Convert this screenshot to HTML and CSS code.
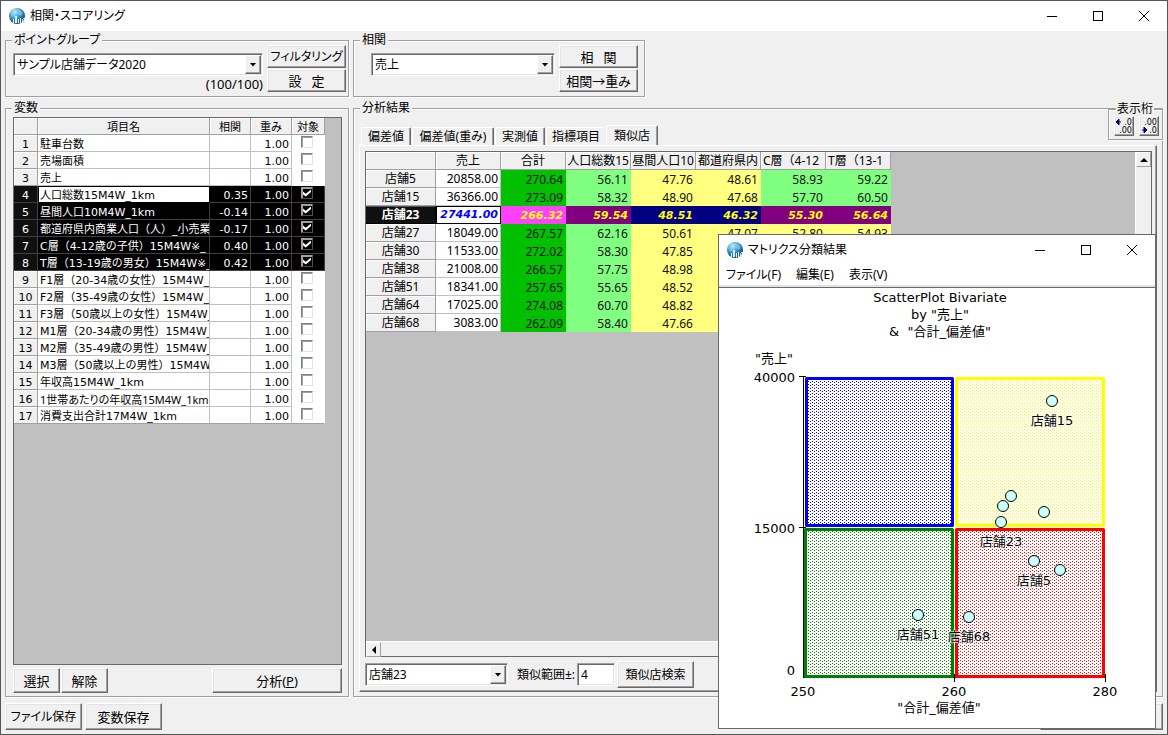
FILE: index.html
```html
<!DOCTYPE html>
<html lang="ja">
<head>
<meta charset="utf-8">
<title>相関・スコアリング</title>
<link rel="stylesheet" href="styles.css">
</head>
<body>
<svg width="0" height="0" class="defs" aria-hidden="true">
  <defs>
    <radialGradient id="globe" cx="35%" cy="25%" r="80%">
      <stop offset="0" stop-color="#d8f2fc"/><stop offset=".4" stop-color="#4aa6d4"/><stop offset=".8" stop-color="#14608f"/><stop offset="1" stop-color="#0a4a78"/>
    </radialGradient>
    <symbol id="logo" viewBox="0 0 17 17">
      <circle cx="8" cy="8" r="8" fill="url(#globe)"/>
      <path d="M8 1c3 0 5 2 6 5l-3 2-2-3zM2 5l3-3 1 4-3 4z" fill="#8fd0ee" opacity=".6"/>
      <path d="M4 15v-4h1v4zM6 15V8h2v7zM9 15v-4h1v4zM11 15v-5h1v5zM13 15v-3h1v3zM15 15v-5h1v5z" fill="#e8f6fc"/>
      <path d="M6 9l2 5M13 12l2-2M13 12l2 3" stroke="#c4dbe8" fill="none"/>
    </symbol>
    <symbol id="min" viewBox="0 0 12 12"><path d="M1 6.500h10" stroke="#000"/></symbol>
    <symbol id="max" viewBox="0 0 12 12"><path d="M1.500 1.500h9v9h-9z" stroke="#000" fill="none"/></symbol>
    <symbol id="close" viewBox="0 0 12 12"><path d="M1 1l10 10M11 1L1 11" stroke="#000" fill="none"/></symbol>
  </defs>
</svg>
<header class="titlebar">
  <svg class="logo"><use href="#logo"/></svg>
  <h1 class="title">相関・スコアリング</h1>
  <div class="winctl">
    <button aria-label="最小化"><svg><use href="#min"/></svg></button>
    <button aria-label="最大化"><svg><use href="#max"/></svg></button>
    <button aria-label="閉じる"><svg><use href="#close"/></svg></button>
  </div>
</header>

<main class="content">
  <fieldset class="group">
    <legend>ポイントグループ</legend>
    <div class="picker">
      <div class="picker-main">
        <span class="combo"><select aria-label="ポイントグループ"><option>サンプル店舗データ2020</option></select><i class="drop"></i></span>
        <span class="count">(100/100)</span>
      </div>
      <div class="picker-btns">
        <button class="btn kana">フィルタリング</button>
        <button class="btn">設&nbsp;&nbsp; 定</button>
      </div>
    </div>
  </fieldset>
  <fieldset class="group corr">
    <legend>相関</legend>
    <div class="picker">
      <div class="picker-main indent">
        <span class="combo"><select aria-label="相関"><option>売上</option></select><i class="drop"></i></span>
      </div>
      <div class="picker-btns">
        <button class="btn">相&nbsp;&nbsp; 関</button>
        <button class="btn">相関→重み</button>
      </div>
    </div>
  </fieldset>

  <fieldset class="group vars">
    <legend>変数</legend>
    <div class="sheet">
      <table class="vartable">
        <colgroup><col class="c-no"><col class="c-name"><col class="c-num"><col class="c-num"><col class="c-chk"></colgroup>
        <thead><tr><th></th><th>項目名</th><th>相関</th><th>重み</th><th>対象</th></tr></thead>
        <tbody>
          <tr><th>1</th><td>駐車台数</td><td></td><td>1.00</td><td><input type="checkbox" aria-label="1"></td></tr>
          <tr><th>2</th><td>売場面積</td><td></td><td>1.00</td><td><input type="checkbox" aria-label="2"></td></tr>
          <tr><th>3</th><td>売上</td><td></td><td>1.00</td><td><input type="checkbox" aria-label="3"></td></tr>
          <tr class="sel"><th>4</th><td class="focus">人口総数15M4W_1km</td><td>0.35</td><td>1.00</td><td><input type="checkbox" aria-label="4" checked></td></tr>
          <tr class="sel"><th>5</th><td>昼間人口10M4W_1km</td><td>-0.14</td><td>1.00</td><td><input type="checkbox" aria-label="5" checked></td></tr>
          <tr class="sel"><th>6</th><td>都道府県内商業人口（人）_小売業</td><td>-0.17</td><td>1.00</td><td><input type="checkbox" aria-label="6" checked></td></tr>
          <tr class="sel"><th>7</th><td>C層（4-12歳の子供）15M4W※_</td><td>0.40</td><td>1.00</td><td><input type="checkbox" aria-label="7" checked></td></tr>
          <tr class="sel"><th>8</th><td>T層（13-19歳の男女）15M4W※_</td><td>0.42</td><td>1.00</td><td><input type="checkbox" aria-label="8" checked></td></tr>
          <tr><th>9</th><td>F1層（20-34歳の女性）15M4W_</td><td></td><td>1.00</td><td><input type="checkbox" aria-label="9"></td></tr>
          <tr><th>10</th><td>F2層（35-49歳の女性）15M4W_</td><td></td><td>1.00</td><td><input type="checkbox" aria-label="10"></td></tr>
          <tr><th>11</th><td>F3層（50歳以上の女性）15M4W_</td><td></td><td>1.00</td><td><input type="checkbox" aria-label="11"></td></tr>
          <tr><th>12</th><td>M1層（20-34歳の男性）15M4W_</td><td></td><td>1.00</td><td><input type="checkbox" aria-label="12"></td></tr>
          <tr><th>13</th><td>M2層（35-49歳の男性）15M4W_</td><td></td><td>1.00</td><td><input type="checkbox" aria-label="13"></td></tr>
          <tr><th>14</th><td>M3層（50歳以上の男性）15M4W_</td><td></td><td>1.00</td><td><input type="checkbox" aria-label="14"></td></tr>
          <tr><th>15</th><td>年収高15M4W_1km</td><td></td><td>1.00</td><td><input type="checkbox" aria-label="15"></td></tr>
          <tr><th>16</th><td class="prop">1世帯あたりの年収高15M4W_1km</td><td></td><td>1.00</td><td><input type="checkbox" aria-label="16"></td></tr>
          <tr><th>17</th><td>消費支出合計17M4W_1km</td><td></td><td>1.00</td><td><input type="checkbox" aria-label="17"></td></tr>
        </tbody>
      </table>
    </div>
    <div class="varbtns">
      <button class="btn small">選択</button>
      <button class="btn small">解除</button>
      <button class="btn analyze">分析(<u>P</u>)</button>
    </div>
  </fieldset>

  <fieldset class="group results">
    <legend>分析結果</legend>
    <div class="tabs" role="tablist">
      <button class="tab" role="tab">偏差値</button>
      <button class="tab wide" role="tab">偏差値(重み)</button>
      <button class="tab" role="tab">実測値</button>
      <button class="tab open" role="tab">指標項目</button>
      <button class="tab active" role="tab" aria-selected="true">類似店</button>
    </div>
    <div class="panel">
      <div class="sheet scroller">
        <div class="view">
          <table class="shops">
            <colgroup><col class="s-name"><col span="7" class="s-val"></colgroup>
            <thead><tr><th></th><th>売上</th><th>合計</th><th>人口総数15</th><th>昼間人口10</th><th>都道府県内</th><th class="pre">C層（4-12</th><th class="pre">T層（13-1</th></tr></thead>
            <tbody>
              <tr><th>店舗5</th><td>20858.00</td><td class="g">270.64</td><td class="l">56.11</td><td class="y">47.76</td><td class="y">48.61</td><td class="l">58.93</td><td class="l">59.22</td></tr>
              <tr><th>店舗15</th><td>36366.00</td><td class="g">273.09</td><td class="l">58.32</td><td class="y">48.90</td><td class="y">47.68</td><td class="l">57.70</td><td class="l">60.50</td></tr>
              <tr class="cur"><th>店舗23</th><td>27441.00</td><td class="m">266.32</td><td class="p">59.54</td><td class="n">48.51</td><td class="n">46.32</td><td class="p">55.30</td><td class="p">56.64</td></tr>
              <tr><th>店舗27</th><td>18049.00</td><td class="g">267.57</td><td class="l">62.16</td><td class="y">50.61</td><td class="y">47.07</td><td class="y">52.80</td><td class="y">54.93</td></tr>
              <tr><th>店舗30</th><td>11533.00</td><td class="g">272.02</td><td class="l">58.30</td><td class="y">47.85</td><td class="y"></td><td class="y"></td><td class="y"></td></tr>
              <tr><th>店舗38</th><td>21008.00</td><td class="g">266.57</td><td class="l">57.75</td><td class="y">48.98</td><td class="y"></td><td class="y"></td><td class="y"></td></tr>
              <tr><th>店舗51</th><td>18341.00</td><td class="g">257.65</td><td class="l">55.65</td><td class="y">48.52</td><td class="y"></td><td class="y"></td><td class="y"></td></tr>
              <tr><th>店舗64</th><td>17025.00</td><td class="g">274.08</td><td class="l">60.70</td><td class="y">48.82</td><td class="y"></td><td class="y"></td><td class="y"></td></tr>
              <tr><th>店舗68</th><td>3083.00</td><td class="g">262.09</td><td class="l">58.40</td><td class="y">47.66</td><td class="y"></td><td class="y"></td><td class="y"></td></tr>
            </tbody>
          </table>
        </div>
        <div class="vbar"><button class="arrow" aria-label="上へ"><svg viewBox="0 0 8 8"><path d="M0 6l4-4 4 4z"/></svg></button></div>
        <div class="hbar"><button class="arrow" aria-label="左へ"><svg viewBox="0 0 8 8"><path d="M6 0L2 4l4 4z"/></svg></button></div>
      </div>
      <div class="search">
        <span class="combo"><select aria-label="店舗"><option>店舗23</option></select><i class="drop"></i></span>
        <label for="range">類似範囲±:</label>
        <input class="field" id="range" type="text" value="4">
        <button class="btn find">類似店検索</button>
      </div>
    </div>
    <fieldset class="group digits">
      <legend>表示桁</legend>
      <div class="digitbtns">
        <button class="btn" aria-label="桁を増やす"><svg viewBox="0 0 18 18"><path d="M1 5h5M4 2L1 5l3 3z" stroke="#000080" fill="#000080"/><text x="17" y="8">.0</text><text x="17" y="16">.00</text></svg></button>
        <button class="btn" aria-label="桁を減らす"><svg viewBox="0 0 18 18"><path d="M2 13h5M4 10l3 3-3 3z" stroke="#000080" fill="#000080"/><text x="17" y="8">.00</text><text x="17" y="16">.0</text></svg></button>
      </div>
    </fieldset>
  </fieldset>
</main>

<footer class="actions">
  <button class="btn kana">ファイル保存</button>
  <button class="btn">変数保存</button>
  <button class="btn last" aria-label="閉じる"></button>
</footer>

<section class="popup">
  <header class="titlebar">
    <svg class="logo"><use href="#logo"/></svg>
    <h2 class="title">マトリクス分類結果</h2>
    <div class="winctl">
      <button aria-label="最小化"><svg><use href="#min"/></svg></button>
      <button aria-label="最大化"><svg><use href="#max"/></svg></button>
      <button aria-label="閉じる"><svg><use href="#close"/></svg></button>
    </div>
  </header>
  <nav class="menu">
    <button>ファイル(F)</button><button>編集(E)</button><button>表示(V)</button>
  </nav>
  <svg class="chart" viewBox="719 288 436 440">
    <defs>
      <pattern id="d-blue" width="4" height="3" patternUnits="userSpaceOnUse"><path fill="#00f" d="M0 0h1v1h-1zM2 1h1v1h-1z"/></pattern>
      <pattern id="d-green" width="4" height="3" patternUnits="userSpaceOnUse"><path fill="#008000" d="M0 0h1v1h-1zM2 1h1v1h-1z"/></pattern>
      <pattern id="d-red" width="4" height="3" patternUnits="userSpaceOnUse"><path fill="#f00" d="M0 0h1v1h-1zM2 1h1v1h-1z"/></pattern>
      <pattern id="d-yellow" width="4" height="3" patternUnits="userSpaceOnUse"><path fill="#ff0" d="M0 0h1v1h-1zM2 1h1v1h-1z"/></pattern>
    </defs>
    <g class="mid">
      <text x="940" y="302">ScatterPlot Bivariate</text>
      <text x="940" y="319">by "売上"</text>
      <text x="940" y="336">&amp;&#160; "合計_偏差値"</text>
      <text x="803" y="696">250</text>
      <text x="954" y="696">260</text>
      <text x="1105" y="696">280</text>
      <text x="939" y="712">"合計_偏差値"</text>
    </g>
    <text x="755" y="363">"売上"</text>
    <g class="end">
      <text x="795" y="382">40000</text>
      <text x="795" y="533">15000</text>
      <text x="795" y="675">0</text>
    </g>
    <path class="axis" d="M799 376.500h7M799 527.500h7M803.500 376v302M803 677.500h303M954.500 674v8M1105.500 674v8"/>
    <g class="quad">
      <rect x="806.500" y="378.500" width="146" height="147" fill="url(#d-blue)" stroke="#00f"/>
      <rect x="956.500" y="378.500" width="147" height="147" fill="url(#d-yellow)" stroke="#ff0"/>
      <rect x="805.500" y="529.500" width="147" height="147" fill="url(#d-green)" stroke="#008000"/>
      <rect x="956.500" y="529.500" width="147" height="147" fill="url(#d-red)" stroke="#f00"/>
    </g>
    <g class="dots">
      <circle cx="1052" cy="401" r="5.500"/><circle cx="1011" cy="496" r="5.500"/><circle cx="1003" cy="506" r="5.500"/>
      <circle cx="1044" cy="512" r="5.500"/><circle cx="1001" cy="522" r="5.500"/><circle cx="1034" cy="561" r="5.500"/>
      <circle cx="1060" cy="570" r="5.500"/><circle cx="918" cy="615" r="5.500"/><circle cx="969" cy="617" r="5.500"/>
    </g>
    <g class="mid names">
      <text x="1052" y="425">店舗15</text>
      <text x="1001" y="546">店舗23</text>
      <text x="1034" y="585">店舗5</text>
      <text x="918" y="639">店舗51</text>
      <text x="969" y="641">店舗68</text>
    </g>
  </svg>
</section>
</body>
</html>
```
FILE: styles.css
```css
* { box-sizing: border-box; }

body {
  margin: 0;
  min-height: 100vh;
  display: flex;
  flex-direction: column;
  position: relative;
  border: 1px solid #555;
  background: #f0f0f0;
  color: #000;
  font: 12px/16px "Noto Sans", "Noto Sans CJK JP", sans-serif;
  font-feature-settings: "palt";
}

button, input, select { font: inherit; color: inherit; font-feature-settings: inherit; }
.defs { position: absolute; }

/* title bars */
.titlebar { display: flex; align-items: center; height: 30px; padding-left: 8px; background: #fff; }
.logo { width: 17px; height: 17px; }
.title { margin: 0 auto 0 4px; font-size: 12px; font-weight: 400; }
.winctl { display: flex; }
.winctl button { display: grid; place-items: center; width: 46px; height: 28px; padding: 0; border: 0; background: none; }
.winctl svg { width: 12px; height: 12px; shape-rendering: crispEdges; }

/* layout */
.content {
  flex: 1;
  display: grid;
  grid-template-columns: 344px 1fr;
  grid-template-rows: auto 1fr;
  gap: 6px 4px;
  padding: 4px 4px 0;
}
.group {
  min-width: 0;
  margin: 0;
  padding: 0;
  border: 1px solid #a0a0a0;
  box-shadow: 1px 1px #fff, inset 1px 1px #fff;
}
.group legend { margin-left: 6px; padding: 0 2px; line-height: 10px; background: #f0f0f0; }
.corr { width: 292px; }

.picker { display: flex; gap: 4px; padding: 0 2px 4px 7px; }
.corr .picker { padding-right: 6px; }
.picker-main { flex: 1; display: flex; flex-direction: column; padding-top: 8px; }
.picker-main.indent { padding-left: 10px; }
.picker-btns { display: grid; align-content: start; gap: 1px; width: 79px; }
.picker-btns .btn { height: 23px; }
.count { text-align: right; font-size: 13px; line-height: 16px; }

/* controls */
.btn {
  padding: 0;
  border: 1px solid;
  border-color: #fff #696969 #696969 #fff;
  box-shadow: inset -1px -1px #a0a0a0, inset 1px 1px #e3e3e3;
  background: #f0f0f0;
  font-size: 13px;
  line-height: 16px;
  white-space: nowrap;
}
.kana { font-size: 12px; }
.combo { display: grid; height: 23px; }
.combo select, .drop { grid-area: 1 / 1; }
.combo select, .field {
  appearance: none;
  width: 100%;
  height: 23px;
  padding: 0 3px;
  border: 1px solid;
  border-color: #a0a0a0 #fff #fff #a0a0a0;
  border-radius: 0;
  box-shadow: inset 1px 1px #696969, inset -1px -1px #e3e3e3;
  background: #fff;
}
.drop {
  justify-self: end;
  display: grid;
  place-items: center;
  width: 16px;
  margin: 2px;
  border: 1px solid;
  border-color: #fff #696969 #696969 #fff;
  box-shadow: inset -1px -1px #a0a0a0;
  background: #f0f0f0;
  pointer-events: none;
}
.drop::after { content: ""; width: 7px; height: 4px; background: #000; clip-path: polygon(0 0, 100% 0, 50% 100%); }

/* sheets */
.sheet { border: 1px solid #696969; background: #c0c0c0; }
table { table-layout: fixed; border-collapse: separate; border-spacing: 0; }
th, td { padding: 0; overflow: hidden; white-space: nowrap; font-weight: 400; }

.vars { display: flex; flex-direction: column; padding: 4px 6px 3px 7px; }
.vars > legend { margin-left: -1px; }
.vars .sheet { flex: 1; }
.vartable {
  width: 311px;
  font: 11px/13px "DejaVu Sans", "Noto Sans CJK JP", sans-serif;
  font-feature-settings: normal;
}
.c-no { width: 24px; }
.c-name { width: 172px; }
.c-num { width: 41px; }
.c-chk { width: 33px; }
.vartable th, .vartable td { height: 17px; padding-top: 3px; border-right: 1px solid #c0c0c0; border-bottom: 1px solid #c0c0c0; }
.vartable th { padding-top: 4px; line-height: 12px; background: #f0f0f0; border-color: #a0a0a0; box-shadow: inset 1px 1px #fff; }
.vartable td { background: #fff; text-align: right; padding-right: 2px; }
.vartable td:nth-child(2) { text-align: left; padding: 3px 0 0 2px; }
.vartable td:last-child { padding: 0; text-align: center; line-height: 0; border-color: #fff; }
.vartable tbody tr:last-child td { border-bottom-color: #a0a0a0; }
.vartable .prop { font-family: "Noto Sans", "Noto Sans CJK JP", sans-serif; font-feature-settings: "palt"; }
.vartable .sel th { background: #101010; color: #fff; border-color: #404040; box-shadow: none; }
.vartable .sel td, .vartable .sel td:last-child { background: #000; color: #fff; border-color: #404040; }
.vartable .sel td.focus { background: #fff; color: #000; outline: 1px solid #000; outline-offset: -1px; }

.vartable input {
  appearance: none;
  display: inline-grid;
  place-items: center;
  width: 12px;
  height: 12px;
  margin: 0 2px 2px 0;
  border: 1px solid;
  border-color: #808080 #e3e3e3 #e3e3e3 #808080;
  box-shadow: inset 1px 1px #a0a0a0;
}
.vartable input:checked { border-color: #a0a0a0 #505050 #505050 #a0a0a0; }
.vartable input:checked::after {
  content: "";
  width: 8px;
  height: 7px;
  background: #fff;
  clip-path: polygon(0 30%, 35% 62%, 100% 0, 100% 36%, 35% 100%, 0 70%);
}

.varbtns { display: flex; gap: 1px; padding-top: 3px; }
.varbtns .btn { height: 25px; }
.small { width: 47px; }
.analyze { width: 130px; margin-left: auto; }

/* results */
.results { position: relative; display: flex; flex-direction: column; padding: 12px 5px 4px; }
.results > legend { margin-left: 1px; }
.tabs { display: flex; align-items: flex-end; gap: 1px; padding-left: 2px; }
.tab {
  width: 50px;
  height: 18px;
  padding: 1px 0 0;
  border: 1px solid;
  border-color: #fff #696969 transparent #fff;
  border-bottom: 0;
  border-radius: 2px 2px 0 0;
  box-shadow: inset -1px 0 #a0a0a0;
  background: none;
  white-space: nowrap;
}
.tab.wide { width: 82px; }
.tab.open { width: 59px; border-right: 0; box-shadow: none; }
.tab.active { width: 52px; height: 20px; padding: 0; }
.panel {
  flex: 1;
  display: flex;
  flex-direction: column;
  padding: 5px 4px 3px 5px;
  border: 1px solid;
  border-color: #fff #696969 #696969 #fff;
  box-shadow: inset -1px -1px #a0a0a0;
}
.scroller { flex: 1; display: grid; grid-template: 1fr 15px / 1fr 16px; }
.view { min-width: 0; overflow: hidden; }
.vbar, .hbar { background: #f0f0f0; }
.vbar { border-left: 1px solid #fff; }
.hbar { grid-column: 1 / 3; border-top: 1px solid #fff; }
.arrow {
  display: grid;
  place-items: center;
  width: 15px;
  height: 15px;
  padding: 0;
  border: 1px solid;
  border-color: #fff #a0a0a0 #a0a0a0 #fff;
  background: #f0f0f0;
}
.arrow svg { width: 8px; height: 8px; }

.shops { width: 525px; line-height: 17px; font-feature-settings: normal; }
.s-name { width: 70px; }
.s-val { width: 65px; }
.shops th, .shops td { height: 18px; }
.shops th { background: #f0f0f0; border-right: 1px solid #a0a0a0; border-bottom: 1px solid #a0a0a0; box-shadow: inset 1px 1px #fff; }
.shops td { padding-right: 2px; text-align: right; background: #fff; border-right: 1px solid #c0c0c0; border-bottom: 1px solid #c0c0c0; }
.shops .pre { text-align: left; padding-left: 2px; }
.shops .g, .shops .l, .shops .y, .shops .m, .shops .p, .shops .n { border: 0; padding-right: 3px; color: #111; }
.shops .g { background: #00c000; }
.shops .l { background: #80ff80; }
.shops .y { background: #ffff80; }
.shops .m { background: #ff40ff; }
.shops .p { background: #800080; }
.shops .n { background: #000080; }
.shops .cur th { background: #101010; color: #fff; font-weight: 700; border-color: #000; box-shadow: inset 0 1px #555; }
.shops .cur td { color: #ff0; font: italic 700 11px/17px "DejaVu Sans", sans-serif; }
.shops .cur td:nth-child(2) { color: #00f; outline: 1px solid #000; outline-offset: -1px; }

.search { display: flex; align-items: center; padding-top: 4px; }
.search .combo { width: 143px; }
.search label { margin: 0 2px 0 9px; }
.search .field { width: 38px; margin-right: 2px; }
.find { width: 77px; height: 27px; font-size: 12px; }

.results .digits { position: absolute; top: -9px; right: -1px; width: 55px; }
.digits legend { margin-left: 7px; padding: 0 1px; }
.digitbtns { display: flex; gap: 5px; padding: 2px 3px 3px 5px; }
.digitbtns .btn { flex: 1; height: 20px; }
.digitbtns svg { display: block; width: 18px; height: 18px; }
.digitbtns text { font: 9px "DejaVu Sans Condensed", "DejaVu Sans", sans-serif; text-anchor: end; }

.actions { display: flex; gap: 3px; padding: 6px 4px 4px; }
.actions .btn { width: 77px; height: 27px; }
.actions .last { width: 123px; margin-left: auto; }

/* matrix window */
.popup {
  position: absolute;
  top: 233px;
  right: 11px;
  width: 438px;
  border: 1px solid #696969;
  background: #fff;
}
.menu { display: flex; gap: 15px; height: 23px; padding-left: 7px; border-bottom: 1px solid #696969; box-shadow: inset 0 -2px #e3e3e3; }
.menu button { padding: 0; height: 20px; border: 0; background: none; }
.chart { display: block; width: 100%; font: 13px "DejaVu Sans", "Noto Sans CJK JP", sans-serif; font-feature-settings: normal; }
.mid { text-anchor: middle; }
.end { text-anchor: end; }
.axis { stroke: #000; shape-rendering: crispEdges; }
.quad { stroke-width: 3; stroke-linejoin: round; }
.dots { fill: #cff; stroke: #000; }
.names { paint-order: stroke; stroke: #fff; stroke-width: 1; }
```
